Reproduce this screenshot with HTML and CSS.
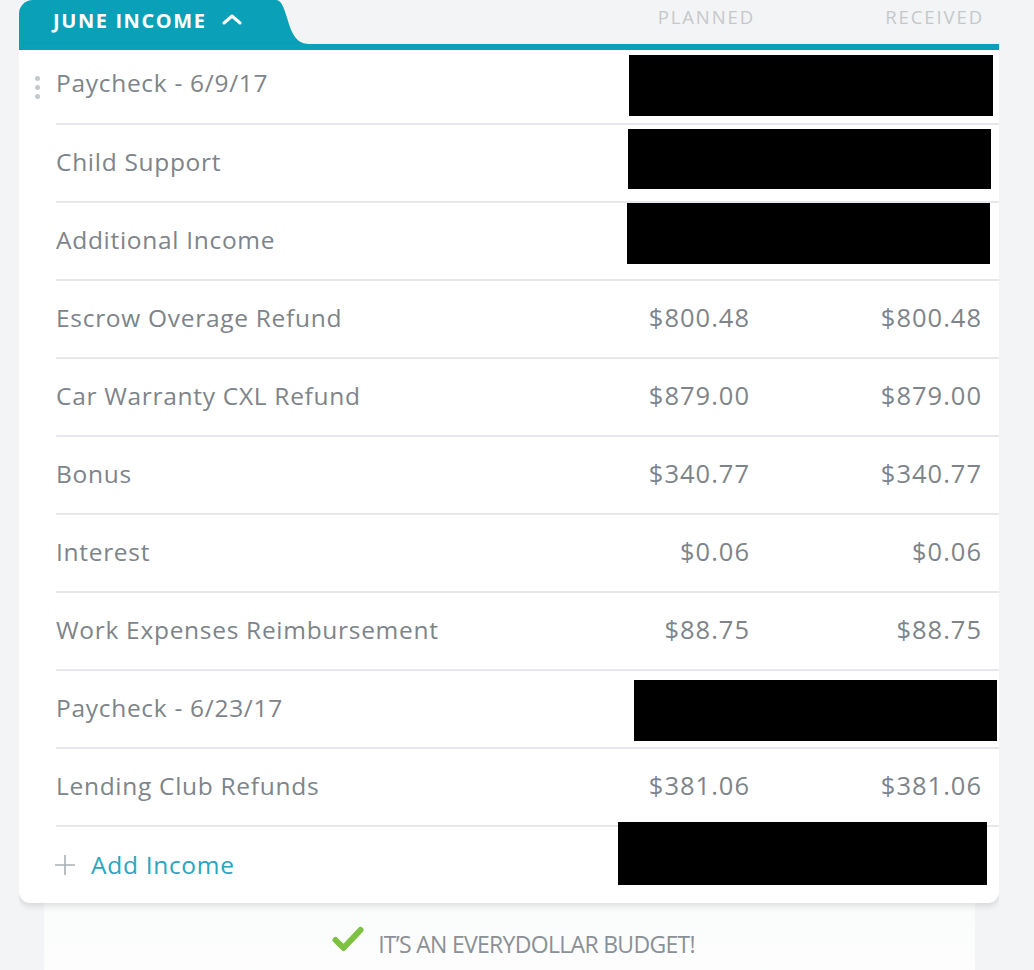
FILE: index.html
```html
<!DOCTYPE html>
<html>
<head>
<meta charset="utf-8">
<link rel="stylesheet" href="styles.css">
</head>
<body>
<div class="wrap">
  <div class="head">
    <div class="tab">
      <span class="tab-title">JUNE INCOME</span>
      <svg class="chev" width="20" height="12" viewBox="0 0 20 12"><path d="M2 10 L10 3 L18 10" fill="none" stroke="#fff" stroke-width="3" stroke-linecap="round" stroke-linejoin="round"/></svg>
    </div>
    <svg class="tab-curve" width="34" height="44" viewBox="0 0 34 44"><path d="M0 0 L1 0 C 9 0, 11 18, 17 32 C 21 40, 26 44, 34 44 L0 44 Z" fill="#0aa0b8"/></svg>
    <div class="head-spacer"></div>
    <div class="hcol planned">PLANNED</div>
    <div class="hcol received">RECEIVED</div>
  </div>
  <div class="card">
    <div class="row first">
      <div class="handle"><span class="dots"><i></i><i></i><i></i></span></div>
      <div class="main"><span class="name">Paycheck - 6/9/17</span><span class="amt p"></span><span class="amt r"></span><div class="redact r1"></div></div>
    </div>
    <div class="row">
      <div class="handle"></div>
      <div class="main"><span class="name">Child Support</span><span class="amt p"></span><span class="amt r"></span><div class="redact r2"></div></div>
    </div>
    <div class="row">
      <div class="handle"></div>
      <div class="main"><span class="name">Additional Income</span><span class="amt p"></span><span class="amt r"></span><div class="redact r3"></div></div>
    </div>
    <div class="row">
      <div class="handle"></div>
      <div class="main"><span class="name">Escrow Overage Refund</span><span class="amt p">$800.48</span><span class="amt r">$800.48</span></div>
    </div>
    <div class="row">
      <div class="handle"></div>
      <div class="main"><span class="name">Car Warranty CXL Refund</span><span class="amt p">$879.00</span><span class="amt r">$879.00</span></div>
    </div>
    <div class="row">
      <div class="handle"></div>
      <div class="main"><span class="name">Bonus</span><span class="amt p">$340.77</span><span class="amt r">$340.77</span></div>
    </div>
    <div class="row">
      <div class="handle"></div>
      <div class="main"><span class="name">Interest</span><span class="amt p">$0.06</span><span class="amt r">$0.06</span></div>
    </div>
    <div class="row">
      <div class="handle"></div>
      <div class="main"><span class="name">Work Expenses Reimbursement</span><span class="amt p">$88.75</span><span class="amt r">$88.75</span></div>
    </div>
    <div class="row">
      <div class="handle"></div>
      <div class="main"><span class="name">Paycheck - 6/23/17</span><span class="amt p"></span><span class="amt r"></span><div class="redact r4"></div></div>
    </div>
    <div class="row">
      <div class="handle"></div>
      <div class="main"><span class="name">Lending Club Refunds</span><span class="amt p">$381.06</span><span class="amt r">$381.06</span></div>
    </div>
    <div class="row add">
      <div class="handle"></div>
      <div class="main">
        <svg class="plus" width="20" height="20" viewBox="0 0 20 20"><path d="M10 0 V20 M0 10 H20" stroke="#aab0b5" stroke-width="1.6"/></svg>
        <span class="add-text">Add Income</span>
        <div class="redact r5"></div>
      </div>
    </div>
  </div>
  <div class="footer">
    <svg class="check" width="32" height="26" viewBox="0 0 32 26"><path d="M3.5 14 L11.5 22 L28.5 4" fill="none" stroke="#7cc142" stroke-width="6" stroke-linecap="round" stroke-linejoin="round"/></svg>
    <span class="footer-text">IT’S AN EVERYDOLLAR BUDGET!</span>
  </div>
</div>
</body>
</html>
```

FILE: styles.css
```css
html, body {
  margin: 0;
  padding: 0;
  background: #f3f4f5;
  font-family: "Open Sans", "Liberation Sans", sans-serif;
}
.wrap {
  width: 980px;
  margin-left: 19px;
  height: 970px;
  overflow: hidden;
}
.head {
  display: flex;
  align-items: stretch;
  height: 44px;
}
.tab {
  background: #0aa0b8;
  border-top-left-radius: 14px;
  width: 256px;
  box-sizing: border-box;
  padding-left: 34px;
  padding-bottom: 4px;
  display: flex;
  align-items: center;
  gap: 15px;
}
.tab-title {
  color: #fff;
  font-weight: 700;
  font-size: 20px;
  letter-spacing: 1.6px;
}
.chev { margin-top: -3px; }
.tab-curve { display: block; }
.head-spacer { flex: 1; }
.hcol {
  color: #c4c8cc;
  font-size: 18.5px;
  letter-spacing: 1.9px;
  text-align: right;
  padding-top: 4px;
}
.hcol.planned { width: 200px; }
.hcol.received { width: 229px; padding-right: 15px; }
.card {
  background: #fff;
  border-top: 6px solid #0aa0b8;
  border-radius: 0 0 11px 11px;
  box-shadow: 0 3px 6px rgba(0,0,0,0.12);
  position: relative;
  z-index: 1;
}
.row {
  display: flex;
  height: 78px;
}
.row.first { height: 73px; }
.handle {
  width: 37px;
  flex: none;
  display: flex;
  align-items: center;
  justify-content: center;
}
.dots {
  display: flex;
  flex-direction: column;
  gap: 4px;
  margin-top: 2px;
}
.dots i {
  display: block;
  width: 5px;
  height: 5px;
  border-radius: 50%;
  background: #c4c8cb;
}
.main {
  flex: 1;
  display: flex;
  align-items: center;
  border-top: 2px solid #e7e8ec;
  position: relative;
  padding-right: 17px;
  padding-bottom: 4px;
  color: #7d848a;
  font-size: 24.5px;
  letter-spacing: 0.7px;
}
.row.first .main { border-top: none; padding-bottom: 8px; }
.name { flex: 1; }
.amt {
  text-align: right;
  font-size: 25.5px;
  letter-spacing: 1px;
}
.amt.p { width: 200px; }
.amt.r { width: 232px; }
.add .main { gap: 16px; padding-top: 3px; }
.add-text { color: #2ba5bf; }
.plus { margin-left: -1px; }
.redact {
  position: absolute;
  background: #000;
  height: 61px;
}
.r1 { left: 573px; top: 5px; width: 364px; }
.r2 { left: 572px; top: 4px; width: 363px; height: 60px; }
.r3 { left: 571px; top: 0px; width: 363px; }
.r4 { left: 578px; top: 9px; width: 363px; }
.r5 { left: 562px; top: -5px; width: 369px; height: 63px; }
.footer {
  margin: 0 24px 0 25px;
  height: 80px;
  background: linear-gradient(#fafbfb, #fdfdfd);
  display: flex;
  justify-content: center;
  align-items: center;
  gap: 14px;
  padding-bottom: 12px;
  box-sizing: border-box;
  padding-top: 14px;
  padding-left: 8px;
}
.footer-text {
  color: #8a9096;
  font-size: 23px;
  letter-spacing: -0.7px;
}
.check { margin-top: -10px; }
```
